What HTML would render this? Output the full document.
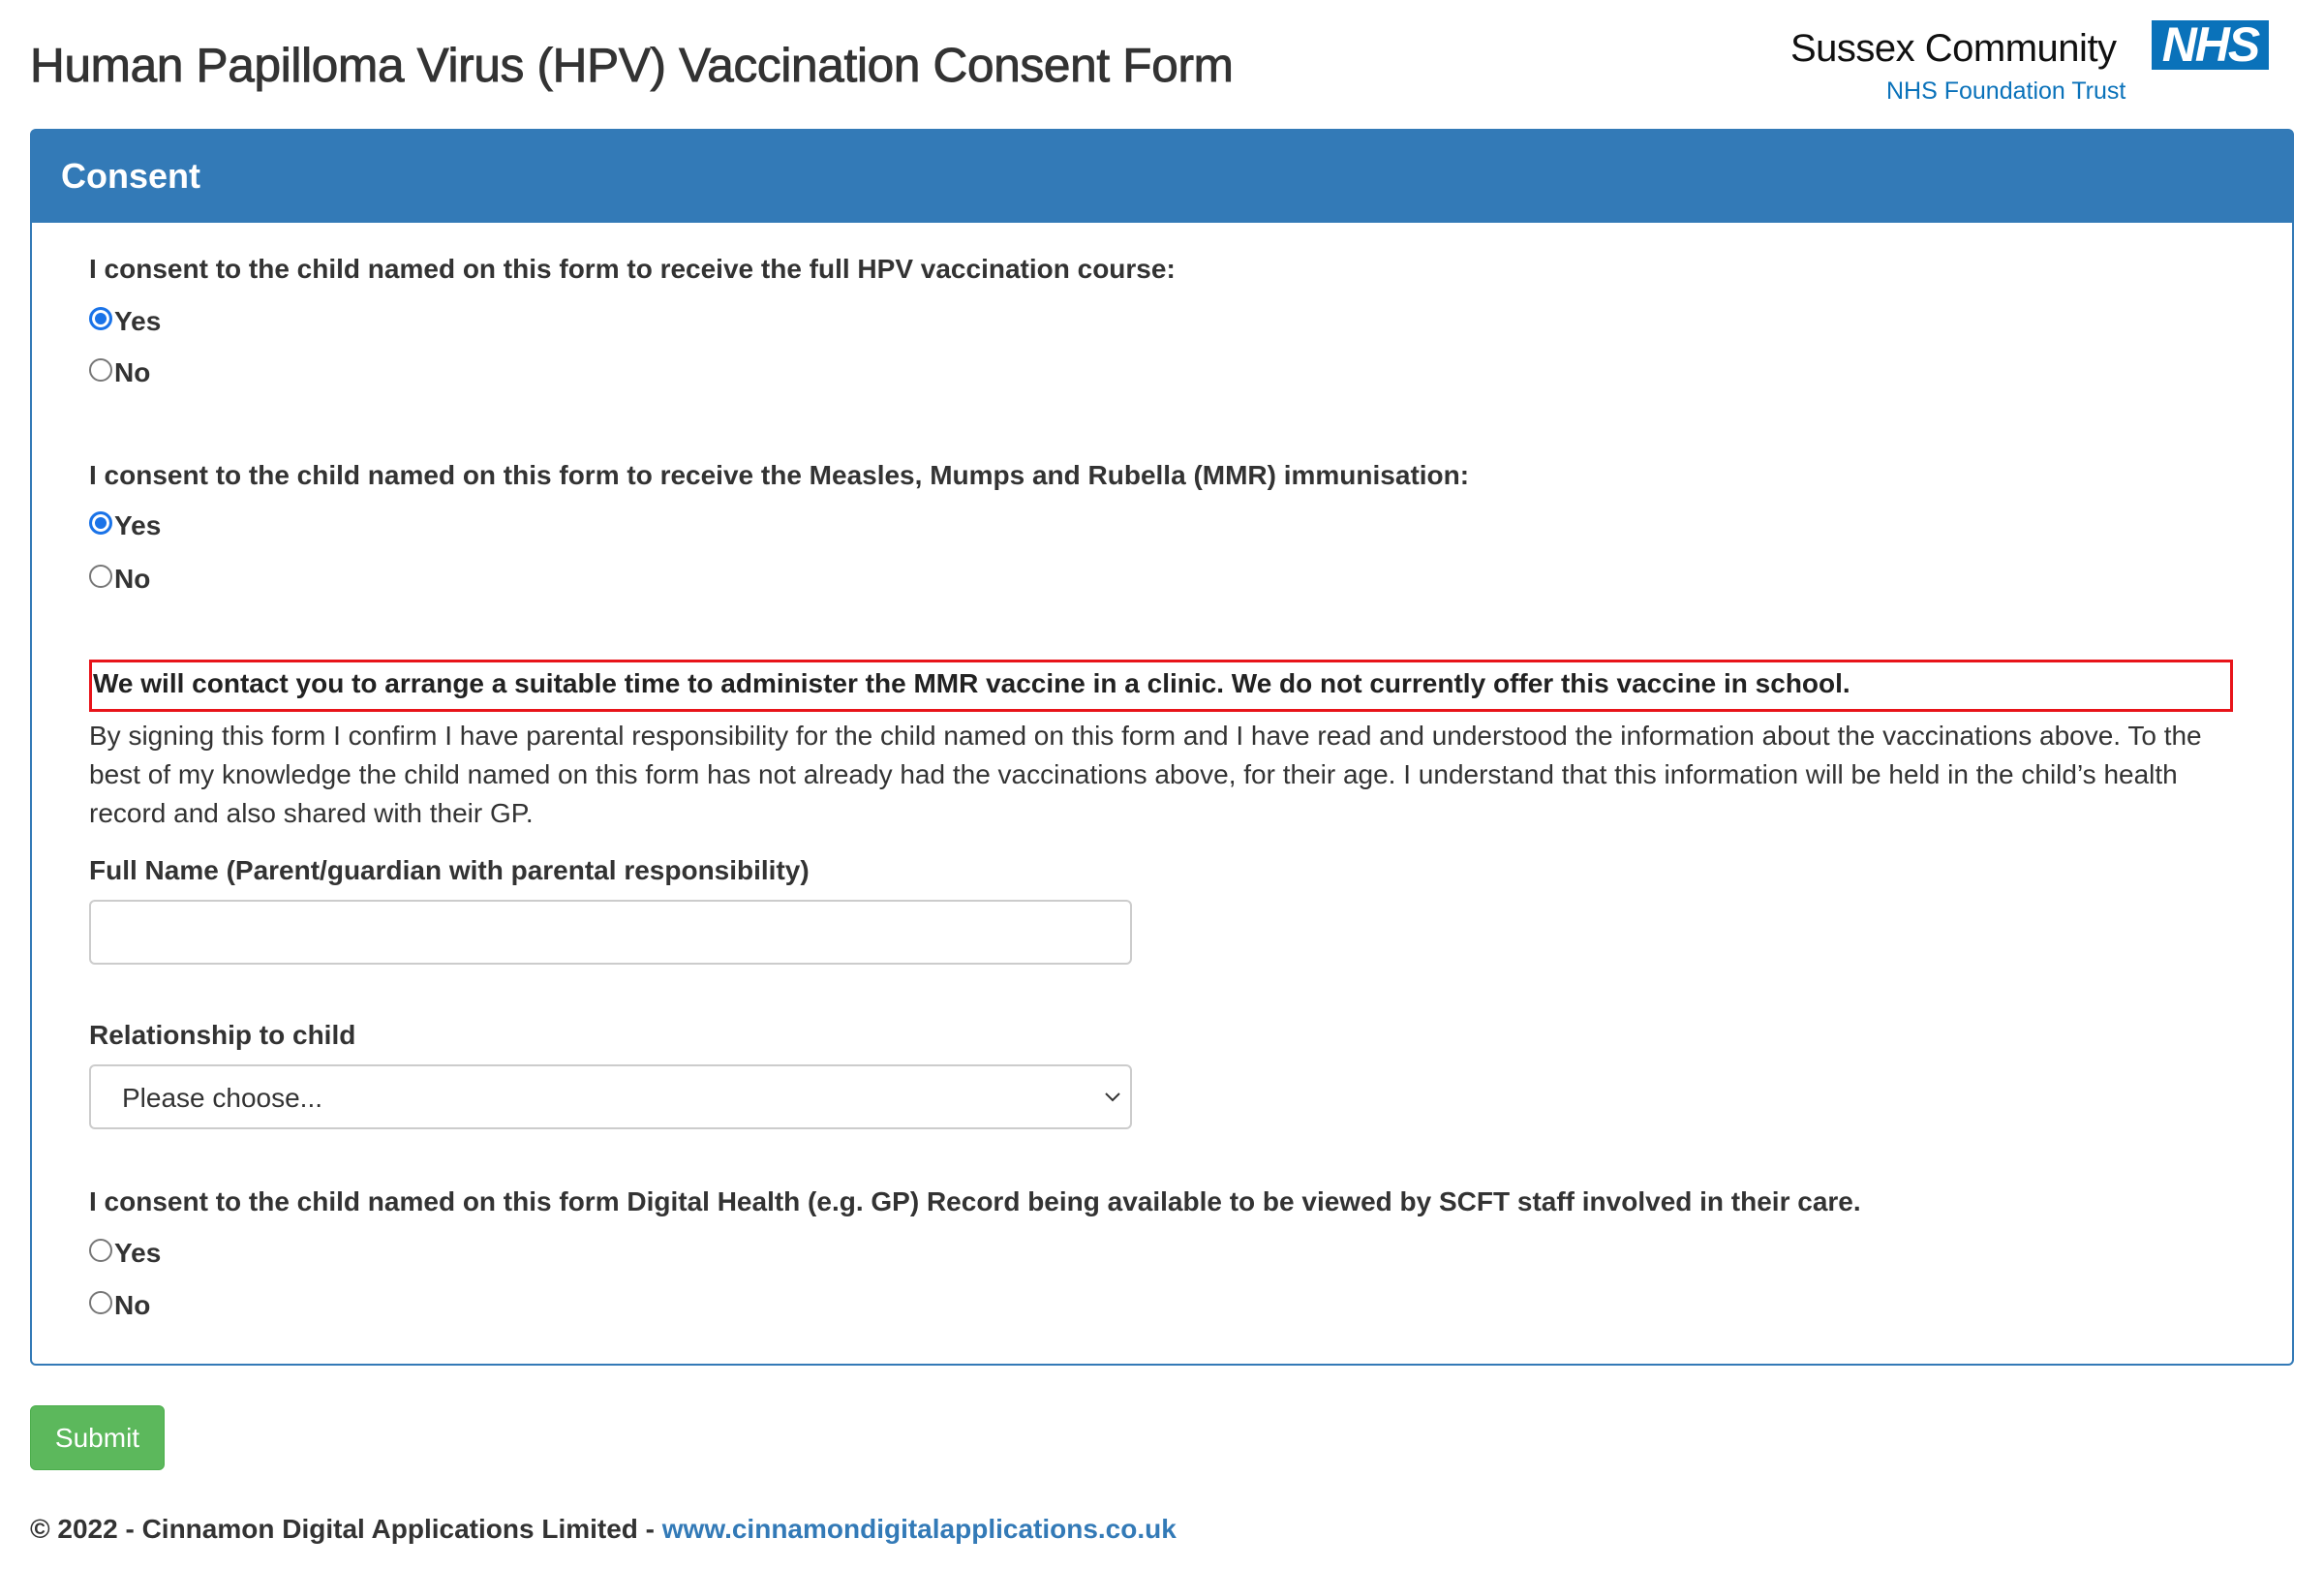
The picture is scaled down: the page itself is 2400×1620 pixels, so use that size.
<!DOCTYPE html>
<html><head><meta charset="utf-8"><style>
*{box-sizing:border-box;margin:0;padding:0}
body{width:2400px;height:1620px;background:#fff;font-family:"Liberation Sans",Arial,sans-serif;color:#212529;position:relative;overflow:hidden}
.a{position:absolute;white-space:nowrap}
h1{position:absolute;left:31px;top:39px;font-size:49.5px;font-weight:normal;color:#333;-webkit-text-stroke:0.9px #333;letter-spacing:-0.3px}
.panel{position:absolute;left:31px;top:133px;width:2338px;height:1277px;border:2px solid #337ab7;border-radius:6px}
.hdr{position:absolute;left:0;top:0;right:0;height:95px;background:#337ab7;color:#fff;font-weight:bold;font-size:36px;padding:26px 30px}
.lbl{position:absolute;left:92px;font-weight:bold;font-size:28px;color:#333}
.r{position:absolute;left:92px;font-weight:bold;font-size:28px;color:#333;display:flex;align-items:center}
.r i{display:inline-block;width:24px;height:24px;border:2px solid #777;border-radius:50%;margin-right:2px;margin-top:-6px}
.r i.on{border:3px solid #1a73e8;background:#1a73e8;box-shadow:inset 0 0 0 3px #fff}
.box{position:absolute;left:92px;top:681px;width:2214px;height:54px;border:3px solid #e8141a}
.p{position:absolute;left:92px;top:740px;width:2230px;font-size:28px;line-height:40px;color:#333}
.in{position:absolute;left:92px;width:1077px;height:67px;border:2px solid #ccc;border-radius:6px}
</style></head><body>
<h1>Human Papilloma Virus (HPV) Vaccination Consent Form</h1>
<div class="a" style="left:1849px;top:28px;font-size:40px;color:#111;letter-spacing:-0.5px">Sussex Community</div>
<div class="a" style="left:2222px;top:21px;width:121px;height:51px;background:#0a72ba;color:#fff;font-weight:bold;font-style:italic;font-size:50px;line-height:51px;text-align:center;letter-spacing:-2px">NHS</div>
<div class="a" style="left:1948px;top:80px;font-size:25px;color:#0a72ba">NHS Foundation Trust</div>
<div class="panel"><div class="hdr">Consent</div></div>
<div class="lbl" style="top:262px">I consent to the child named on this form to receive the full HPV vaccination course:</div>
<div class="r" style="top:316px"><i class="on"></i>Yes</div>
<div class="r" style="top:369px"><i></i>No</div>
<div class="lbl" style="top:475px">I consent to the child named on this form to receive the Measles, Mumps and Rubella (MMR) immunisation:</div>
<div class="r" style="top:527px"><i class="on"></i>Yes</div>
<div class="r" style="top:582px"><i></i>No</div>
<div class="box"></div>
<div class="lbl" style="top:690px;left:96px;color:#222">We will contact you to arrange a suitable time to administer the MMR vaccine in a clinic. We do not currently offer this vaccine in school.</div>
<div class="p">By signing this form I confirm I have parental responsibility for the child named on this form and I have read and understood the information about the vaccinations above. To the best of my knowledge the child named on this form has not already had the vaccinations above, for their age. I understand that this information will be held in the child’s health record and also shared with their GP.</div>
<div class="lbl" style="top:883px">Full Name (Parent/guardian with parental responsibility)</div>
<div class="in" style="top:929px"></div>
<div class="lbl" style="top:1053px">Relationship to child</div>
<div class="in" style="top:1099px;font-size:28px;color:#333;padding:17px 32px">Please choose...<svg style="position:absolute;right:10px;top:27px" width="16" height="10" viewBox="0 0 16 10"><path d="M1 1l7 7 7-7" fill="none" stroke="#333" stroke-width="2"/></svg></div>
<div class="lbl" style="top:1225px">I consent to the child named on this form Digital Health (e.g. GP) Record being available to be viewed by SCFT staff involved in their care.</div>
<div class="r" style="top:1278px"><i></i>Yes</div>
<div class="r" style="top:1332px"><i></i>No</div>
<div class="a" style="left:31px;top:1451px;width:139px;height:67px;background:#5cb85c;border:1px solid #4cae4c;border-radius:6px;color:#fff;font-size:28px;line-height:65px;text-align:center">Submit</div>
<div class="a" style="left:31px;top:1563px;font-size:28px;font-weight:bold;color:#333">© 2022 - Cinnamon Digital Applications Limited - <span style="color:#337ab7">www.cinnamondigitalapplications.co.uk</span></div>
</body></html>
